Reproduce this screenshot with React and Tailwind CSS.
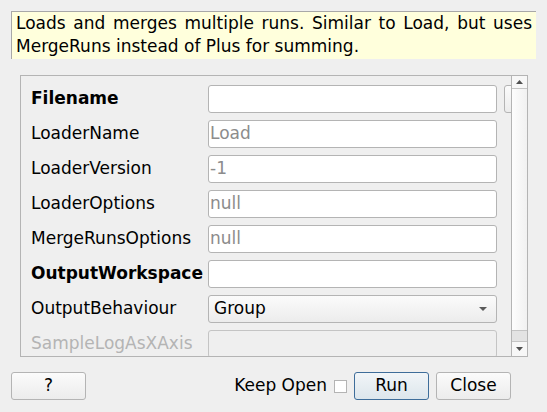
import React from "react";

const rows = [
  { label: "Filename", bold: true, kind: "text", value: "", browse: true },
  { label: "LoaderName", kind: "text", placeholder: "Load" },
  { label: "LoaderVersion", kind: "text", placeholder: "-1" },
  { label: "LoaderOptions", kind: "text", placeholder: "null" },
  { label: "MergeRunsOptions", kind: "text", placeholder: "null" },
  { label: "OutputWorkspace", bold: true, kind: "text", value: "" },
  { label: "OutputBehaviour", kind: "combo", value: "Group" },
  { label: "SampleLogAsXAxis", kind: "disabled" },
];

function Field({ row }) {
  if (row.kind === "combo") {
    return (
      <div className="w-[289px] h-[28px] shrink-0 rounded-[3px] border border-[#b4b4b4] bg-gradient-to-b from-[#fbfbfb] to-[#ececec] flex items-center pl-[5px] pr-[9px] text-black">
        <span className="flex-1">{row.value}</span>
        <svg width="8" height="5" viewBox="0 0 8 5">
          <path d="M0 0 L8 0 L4 4 Z" fill="#5a5a5a" />
        </svg>
      </div>
    );
  }
  if (row.kind === "disabled") {
    return (
      <div className="w-[289px] h-[28px] shrink-0 rounded-[3px] border border-[#c4c4c4] bg-[#efefef]" />
    );
  }
  return (
    <div className="w-[289px] h-[28px] shrink-0 rounded-[3px] border border-[#b4b4b4] bg-white flex items-center pl-[1px] text-[#8c8c8c]">
      {row.placeholder || ""}
    </div>
  );
}

export default function App() {
  return (
    <div
      className="w-[547px] h-[412px] bg-[#efefef] overflow-hidden text-[17px] text-black"
      style={{ fontFamily: '"DejaVu Sans", sans-serif' }}
    >
      {/* description tooltip */}
      <div className="ml-[11px] mt-[11px] w-[525px] h-[48px] bg-[#ffffdc] border-t border-l border-[#a8a8a8] pl-[4px] pr-[4px] leading-[23px]">
        <div className="whitespace-nowrap text-justify [text-align-last:justify]">
          Loads and merges multiple runs. Similar to Load, but uses
        </div>
        <div className="whitespace-nowrap">MergeRuns instead of Plus for summing.</div>
      </div>

      {/* property frame */}
      <div className="ml-[20px] mt-[16px] w-[508px] h-[282px] border border-[#b4b4b4] flex overflow-hidden">
        <div className="flex-1 min-w-0 overflow-hidden pt-[9px] pl-[10px] flex flex-col gap-[7px]">
          {rows.map((row) => (
            <div key={row.label} className="flex items-center h-[28px] shrink-0">
              <div
                className={
                  "w-[177px] shrink-0 whitespace-nowrap " +
                  (row.bold ? "font-bold " : "") +
                  (row.kind === "disabled" ? "text-[#b4b4b4]" : "")
                }
              >
                {row.label}
              </div>
              <Field row={row} />
              {row.browse && (
                <div className="ml-[7px] w-[40px] h-[28px] shrink-0 rounded-[3px] border border-[#b4b4b4] bg-gradient-to-b from-[#fbfbfb] to-[#ececec]" />
              )}
            </div>
          ))}
        </div>

        {/* scrollbar */}
        <div className="w-[16px] shrink-0 border-l border-[#b4b4b4] bg-[#f7f7f7] flex flex-col">
          <div className="h-[12px] flex items-center justify-center">
            <svg width="7" height="4" viewBox="0 0 7 4">
              <path d="M0 4 L7 4 L3.5 0 Z" fill="#505050" />
            </svg>
          </div>
          <div className="h-[243px] border-t border-b border-[#c4c4c4] bg-gradient-to-r from-[#fdfdfd] to-[#f1f1f1]" />
          <div className="h-[10px] bg-[#e3e3e3]" />
          <div className="h-[15px] border-t border-[#c4c4c4] flex items-center justify-center">
            <svg width="7" height="4" viewBox="0 0 7 4">
              <path d="M0 0 L7 0 L3.5 4 Z" fill="#505050" />
            </svg>
          </div>
        </div>
      </div>

      {/* buttons */}
      <div className="mt-[15px] flex items-center pl-[11px] pr-[36px]">
        <button className="w-[75px] h-[28px] rounded-[3px] border border-[#b4b4b4] bg-gradient-to-b from-[#fbfbfb] to-[#ececec]">
          ?
        </button>
        <div className="flex-1" />
        <span className="mr-[7px]">Keep Open</span>
        <div className="w-[13px] h-[13px] border border-[#b4b4b4] bg-white mr-[7px]" />
        <button className="w-[75px] h-[28px] rounded-[3px] border border-[#3e6d9a] bg-gradient-to-b from-[#f1f5f8] to-[#dde6ec] mr-[7px]">
          Run
        </button>
        <button className="w-[75px] h-[28px] rounded-[3px] border border-[#b4b4b4] bg-gradient-to-b from-[#fbfbfb] to-[#ececec]">
          Close
        </button>
      </div>
    </div>
  );
}
